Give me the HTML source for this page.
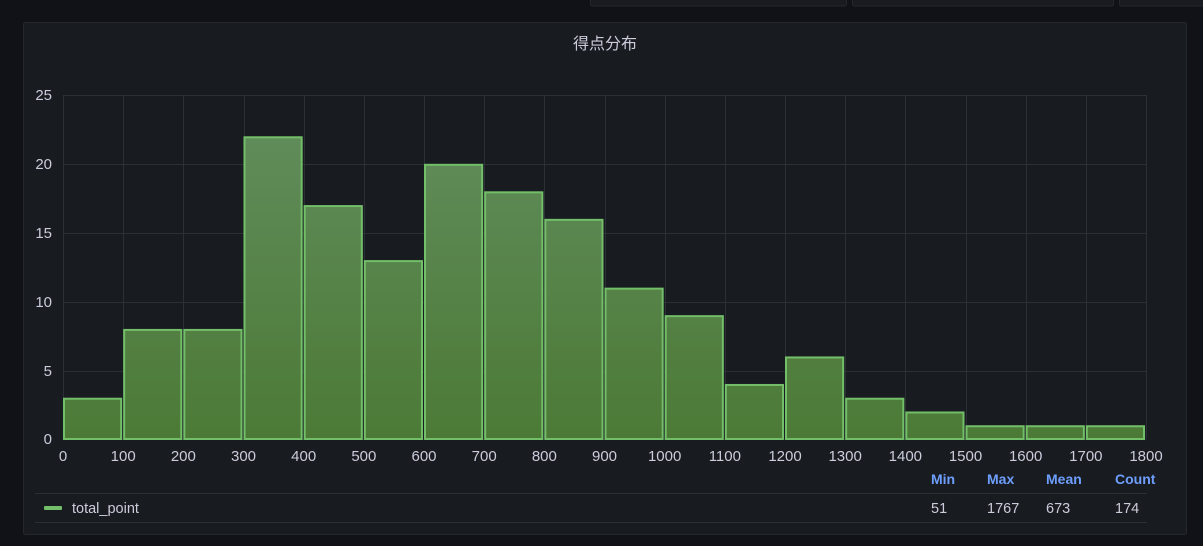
<!DOCTYPE html>
<html><head><meta charset="utf-8"><style>
body{margin:0;width:1203px;height:546px;background:#111217;overflow:hidden;font-family:"Liberation Sans","Noto Sans CJK SC",sans-serif;}
</style></head><body>
<svg width="1203" height="546" xmlns="http://www.w3.org/2000/svg" style="position:absolute;left:0;top:0">
<defs><linearGradient id="g" x1="0" y1="95" x2="0" y2="439" gradientUnits="userSpaceOnUse"><stop offset="0" stop-color="#628e5e"/><stop offset="1" stop-color="#4c7a36"/></linearGradient></defs>
<rect x="590.5" y="-5" width="256" height="11" rx="2" fill="#181b1f" stroke="#24272c"/>
<rect x="852.5" y="-5" width="261" height="11" rx="2" fill="#181b1f" stroke="#24272c"/>
<rect x="1119.5" y="-5" width="90" height="11" rx="2" fill="#181b1f" stroke="#24272c"/>
<rect x="23.5" y="22.5" width="1163" height="512" rx="2" fill="#181b1f" stroke="#24272c"/>
<text x="605" y="49" fill="#ccccdc" font-size="16" text-anchor="middle">得点分布</text>
<g stroke="#2c2f35" stroke-width="1">
<line x1="63" y1="95.5" x2="1146" y2="95.5"/><line x1="63" y1="164.5" x2="1146" y2="164.5"/><line x1="63" y1="233.5" x2="1146" y2="233.5"/><line x1="63" y1="302.5" x2="1146" y2="302.5"/><line x1="63" y1="371.5" x2="1146" y2="371.5"/><line x1="63" y1="439.5" x2="1146" y2="439.5"/>
</g>
<g id="vg" stroke="#2c2f35"></g>
<g id="bars"></g>
<g fill="#ccccdc" font-size="15" text-anchor="end">
<text x="52" y="100">25</text><text x="52" y="169">20</text><text x="52" y="238">15</text><text x="52" y="307">10</text><text x="52" y="376">5</text><text x="52" y="444">0</text>
</g>
<g id="xl" fill="#ccccdc" font-size="15" text-anchor="middle"></g>
<g font-size="14" fill="#6e9fff" font-weight="bold">
<text x="931" y="484">Min</text><text x="987" y="484">Max</text><text x="1046" y="484">Mean</text><text x="1115" y="484">Count</text>
</g>
<line x1="35" y1="493.5" x2="1147" y2="493.5" stroke="#2c2f35"/>
<line x1="35" y1="522.5" x2="1147" y2="522.5" stroke="#2c2f35"/>
<rect x="44" y="506" width="18" height="4" rx="1" fill="#73bf69"/>
<g font-size="14.5" fill="#ccccdc">
<text x="72" y="513">total_point</text>
<text x="931" y="513">51</text><text x="987" y="513">1767</text><text x="1046" y="513">673</text><text x="1115" y="513">174</text>
</g>
</svg>
<script>
var d=[3,8,8,22,17,13,20,18,16,11,9,4,6,3,2,1,1,1],ns="http://www.w3.org/2000/svg",w=(1146-63)/18,b=document.getElementById('bars'),v=document.getElementById('vg'),xl=document.getElementById('xl');
for(var i=0;i<=18;i++){var x=63+i*w;var l=document.createElementNS(ns,'line');l.setAttribute('x1',Math.round(x)+.5);l.setAttribute('x2',Math.round(x)+.5);l.setAttribute('y1',95);l.setAttribute('y2',439);v.appendChild(l);
var t=document.createElementNS(ns,'text');t.setAttribute('x',x);t.setAttribute('y',461);t.textContent=i*100;xl.appendChild(t);}
d.forEach(function(c,i){var x=63+i*w,h=c*344/25;var r=document.createElementNS(ns,'rect');r.setAttribute('x',x+1);r.setAttribute('y',439-h+1);r.setAttribute('width',w-3);r.setAttribute('height',h-1);r.setAttribute('fill','url(#g)');r.setAttribute('stroke','#73bf69');r.setAttribute('stroke-width','2');b.appendChild(r);});
</script>
</body></html>
